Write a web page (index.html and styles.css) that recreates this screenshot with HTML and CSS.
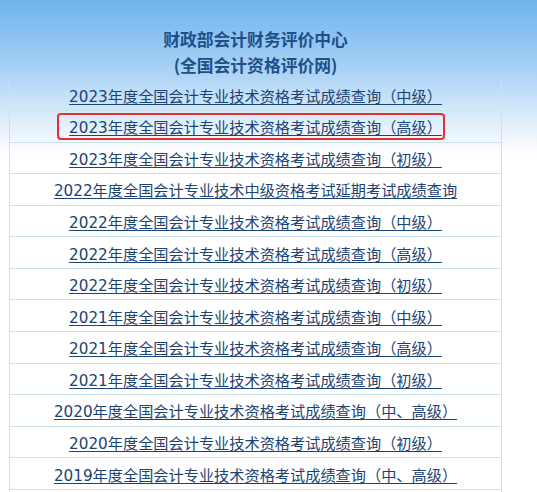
FILE: index.html
```html
<!DOCTYPE html>
<html lang="zh-CN">
<head>
<meta charset="utf-8">
<title>财政部会计财务评价中心</title>
<link rel="stylesheet" href="styles.css">
</head>
<body>
<div class="page">
  <div class="panel">
    <div class="title">
      <div>财政部会计财务评价中心</div>
      <div>(全国会计资格评价网)</div>
    </div>
    <div class="list">
      <div class="row first"><a href="#">2023年度全国会计专业技术资格考试成绩查询（中级）</a></div>
      <div class="row"><a href="#">2023年度全国会计专业技术资格考试成绩查询（高级）</a><span class="mark"></span></div>
      <div class="row"><a href="#">2023年度全国会计专业技术资格考试成绩查询（初级）</a></div>
      <div class="row"><a href="#">2022年度全国会计专业技术中级资格考试延期考试成绩查询</a></div>
      <div class="row"><a href="#">2022年度全国会计专业技术资格考试成绩查询（中级）</a></div>
      <div class="row"><a href="#">2022年度全国会计专业技术资格考试成绩查询（高级）</a></div>
      <div class="row"><a href="#">2022年度全国会计专业技术资格考试成绩查询（初级）</a></div>
      <div class="row"><a href="#">2021年度全国会计专业技术资格考试成绩查询（中级）</a></div>
      <div class="row"><a href="#">2021年度全国会计专业技术资格考试成绩查询（高级）</a></div>
      <div class="row"><a href="#">2021年度全国会计专业技术资格考试成绩查询（初级）</a></div>
      <div class="row"><a href="#">2020年度全国会计专业技术资格考试成绩查询（中、高级）</a></div>
      <div class="row"><a href="#">2020年度全国会计专业技术资格考试成绩查询（初级）</a></div>
      <div class="row"><a href="#">2019年度全国会计专业技术资格考试成绩查询（中、高级）</a></div>
    </div>
  </div>
</div>
</body>
</html>
```

FILE: styles.css
```css
html, body {
  margin: 0;
  padding: 0;
  height: 100%;
  overflow: hidden;
}
body {
  background: linear-gradient(to bottom, #6fb3ee 0px, #a9d2f5 70px, #e2f0fc 125px, #ffffff 155px, #ffffff 100%);
  font-family: "DejaVu Sans", "Noto Sans CJK SC", sans-serif;
}
.page {
  padding-left: 9px;
}
.panel {
  width: 493px;
}
.title {
  padding-top: 26px;
  text-align: center;
  font-family: "Noto Sans CJK SC", sans-serif;
  font-weight: 700;
  font-size: 16.8px;
  line-height: 26px;
  color: #1f4f88;
}
.list {
  border-left: 1px solid #cde3ec;
  border-right: 1px solid #cde3ec;
  padding-bottom: 20px;
}
.row {
  position: relative;
  box-sizing: border-box;
  height: 31.58px;
  border-bottom: 1px solid #cde3ec;
  display: flex;
  align-items: center;
  justify-content: center;
  font-size: 15.2px;
  white-space: nowrap;
}
.row.first {
  height: 33px;
  padding-top: 2px;
}
.row a {
  color: #1b4373;
  text-decoration: underline;
  text-underline-offset: 2px;
}
.mark {
  position: absolute;
  left: 47px;
  top: 2px;
  width: 388px;
  height: 27px;
  box-sizing: border-box;
  border: 2px solid #e3322b;
  border-radius: 4px;
}
```
